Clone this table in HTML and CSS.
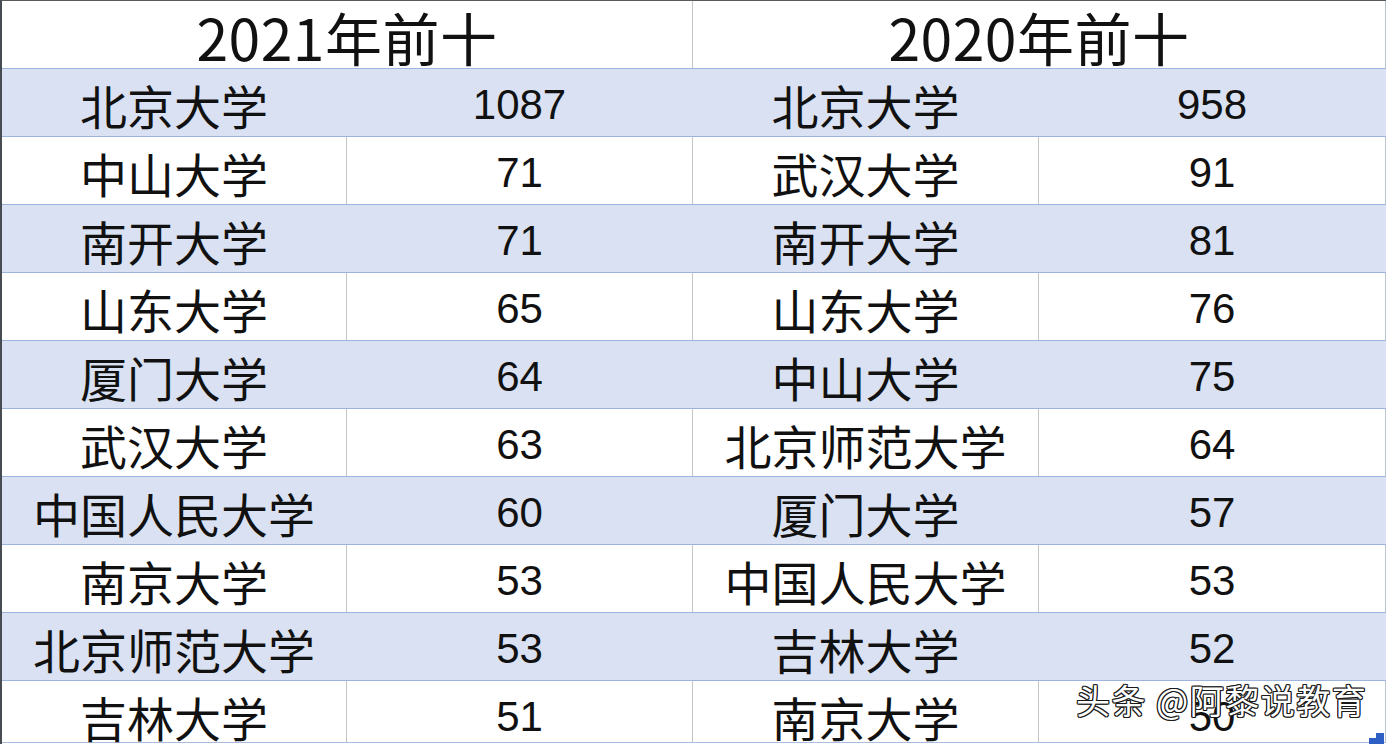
FILE: index.html
```html
<!DOCTYPE html>
<html lang="zh-CN">
<head>
<meta charset="utf-8">
<title>2021年前十 / 2020年前十</title>
<link rel="stylesheet" href="styles.css">
</head>
<body>
<div class="sheet">
  <div class="row head">
    <div class="cell title">2021年前十</div>
    <div class="cell title">2020年前十</div>
  </div>
  <div class="row band">
    <div class="cell name">北京大学</div><div class="cell num">1087</div>
    <div class="cell name">北京大学</div><div class="cell num">958</div>
  </div>
  <div class="row">
    <div class="cell name">中山大学</div><div class="cell num">71</div>
    <div class="cell name">武汉大学</div><div class="cell num">91</div>
  </div>
  <div class="row band">
    <div class="cell name">南开大学</div><div class="cell num">71</div>
    <div class="cell name">南开大学</div><div class="cell num">81</div>
  </div>
  <div class="row">
    <div class="cell name">山东大学</div><div class="cell num">65</div>
    <div class="cell name">山东大学</div><div class="cell num">76</div>
  </div>
  <div class="row band">
    <div class="cell name">厦门大学</div><div class="cell num">64</div>
    <div class="cell name">中山大学</div><div class="cell num">75</div>
  </div>
  <div class="row">
    <div class="cell name">武汉大学</div><div class="cell num">63</div>
    <div class="cell name">北京师范大学</div><div class="cell num">64</div>
  </div>
  <div class="row band">
    <div class="cell name">中国人民大学</div><div class="cell num">60</div>
    <div class="cell name">厦门大学</div><div class="cell num">57</div>
  </div>
  <div class="row">
    <div class="cell name">南京大学</div><div class="cell num">53</div>
    <div class="cell name">中国人民大学</div><div class="cell num">53</div>
  </div>
  <div class="row band">
    <div class="cell name">北京师范大学</div><div class="cell num">53</div>
    <div class="cell name">吉林大学</div><div class="cell num">52</div>
  </div>
  <div class="row last">
    <div class="cell name">吉林大学</div><div class="cell num">51</div>
    <div class="cell name">南京大学</div><div class="cell num">50</div>
  </div>
  <div class="watermark">头条 @阿黎说教育</div>
  <div class="handle"><span class="handle-notch"></span></div>
</div>
</body>
</html>
```
FILE: styles.css
```css
html, body {
  margin: 0;
  padding: 0;
  background: #ffffff;
}
body {
  width: 1386px;
  height: 744px;
  overflow: hidden;
  font-family: "Noto Sans CJK SC", "Noto Sans", sans-serif;
  color: #111111;
}
.sheet {
  position: relative;
  box-sizing: border-box;
  width: 1386px;
  height: 744px;
  border-top: 1px solid #5a5a5a;
  border-left: 2px solid #474c52;
  overflow: hidden;
  background: #ffffff;
}
.row {
  display: grid;
  grid-template-columns: 345px 346px 346px 347px;
  box-sizing: border-box;
  height: 68px;
  border-bottom: 1px solid #9db5dc;
  background: #ffffff;
}
.row.band {
  background: #d9e1f2;
}
.row.head {
  grid-template-columns: 691px 693px;
}
.row.last {
  height: 62px;
  border-bottom-color: #a9bddf;
}
.cell {
  box-sizing: border-box;
  border-right: 1px solid #c4c4c4;
  text-align: center;
  white-space: nowrap;
  height: 67px;
}
.row.band .cell {
  border-right-color: transparent;
}
.row.last .cell {
  height: 61px;
}
.cell:last-child {
  border-right-color: #b8c3d3;
}
.title {
  font-size: 57px;
  line-height: 63px;
  padding-top: 4px;
  letter-spacing: 0.5px;
}
.name {
  font-size: 47px;
  line-height: 63px;
  padding-top: 4px;
}
.num {
  font-family: "Liberation Sans", Arial, sans-serif;
  font-size: 42px;
  line-height: 63px;
  padding-top: 4px;
}
.watermark {
  position: absolute;
  left: 1074px;
  top: 677px;
  font-family: "Noto Sans CJK SC", sans-serif;
  font-size: 34px;
  line-height: 44px;
  color: #ffffff;
  letter-spacing: 1.5px;
  text-shadow:
    1px 0 0 #1a1a1a, -1px 0 0 #1a1a1a, 0 1px 0 #1a1a1a, 0 -1px 0 #1a1a1a,
    1px 1px 0 #1a1a1a, -1px -1px 0 #1a1a1a, 1px -1px 0 #1a1a1a, -1px 1px 0 #1a1a1a;
}
.handle {
  position: absolute;
  left: 1367px;
  top: 732px;
  width: 15px;
  height: 12px;
  background: #2e5fc4;
}
.handle-notch {
  display: block;
  width: 7px;
  height: 5px;
  background: #ffffff;
}
```
